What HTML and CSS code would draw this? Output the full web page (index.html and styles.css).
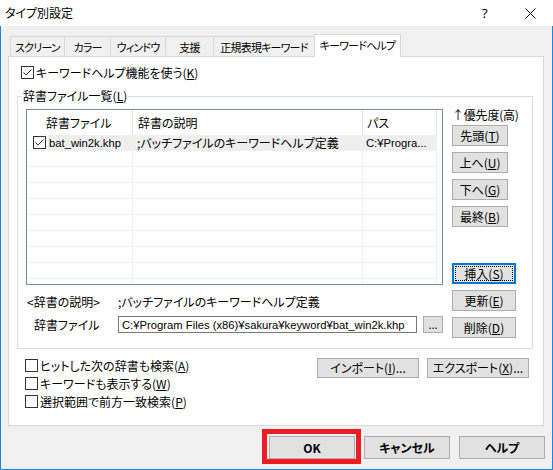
FILE: index.html
```html
<!DOCTYPE html>
<html lang="ja">
<head>
<meta charset="utf-8">
<title>タイプ別設定</title>
<link rel="stylesheet" href="styles.css">
</head>
<body>
<div class="window">
  <div class="titlebar">
    <span class="title">タイプ別設定</span>
    <span class="tb-help">?</span>
    <svg class="tb-close" width="11" height="11" viewBox="0 0 11 11"><path d="M0.5 0.5 L10.5 10.5 M10.5 0.5 L0.5 10.5" stroke="#000" stroke-width="1" fill="none"/></svg>
  </div>
  <div class="frame">
    <div class="tabs">
      <div class="tab w1">スクリーン</div>
      <div class="tab w2">カラー</div>
      <div class="tab w3">ウィンドウ</div>
      <div class="tab w4">支援</div>
      <div class="tab w5">正規表現キーワード</div>
      <div class="tab w6 active">キーワードヘルプ</div>
    </div>
    <div class="panel">
      <div class="check-row top-check">
        <svg class="cb" width="13" height="13" viewBox="0 0 13 13"><rect x="0.5" y="0.5" width="12" height="12" fill="#fff" stroke="#333"/><path d="M2.5 6.5 L5 9 L10.5 3.5" fill="none" stroke="#333" stroke-width="1"/></svg>
        <span>キーワードヘルプ機能を使う(<u>K</u>)</span>
      </div>
      <div class="group">
        <div class="group-title">辞書ファイル一覧(<u>L</u>)</div>
        <div class="group-body">
          <div class="group-left">
            <div class="list">
              <div class="lv-head">
                <div class="cell c1 h1">辞書ファイル</div>
                <div class="cell c2 h2">辞書の説明</div>
                <div class="cell c3 h3">パス</div>
              </div>
              <div class="lv-row sel">
                <div class="cell c1 r1">
                  <svg class="cb" width="13" height="13" viewBox="0 0 13 13"><rect x="0.5" y="0.5" width="12" height="12" fill="#fff" stroke="#333"/><path d="M2.5 6.5 L5 9 L10.5 3.5" fill="none" stroke="#333" stroke-width="1"/></svg>
                  <span class="en">bat_win2k.khp</span>
                </div>
                <div class="cell c2 r2">;バッチファイルのキーワードヘルプ定義</div>
                <div class="cell c3 r3"><span class="en">C:¥Progra...</span></div>
              </div>
              <div class="lv-row"><div class="cell c1"></div><div class="cell c2"></div><div class="cell c3"></div></div>
              <div class="lv-row"><div class="cell c1"></div><div class="cell c2"></div><div class="cell c3"></div></div>
              <div class="lv-row"><div class="cell c1"></div><div class="cell c2"></div><div class="cell c3"></div></div>
              <div class="lv-row"><div class="cell c1"></div><div class="cell c2"></div><div class="cell c3"></div></div>
              <div class="lv-row"><div class="cell c1"></div><div class="cell c2"></div><div class="cell c3"></div></div>
              <div class="lv-row"><div class="cell c1"></div><div class="cell c2"></div><div class="cell c3"></div></div>
              <div class="lv-row"><div class="cell c1"></div><div class="cell c2"></div><div class="cell c3"></div></div>
              <div class="lv-row"><div class="cell c1"></div><div class="cell c2"></div><div class="cell c3"></div></div>
              <div class="lv-row"><div class="cell c1"></div><div class="cell c2"></div><div class="cell c3"></div></div>
            </div>
            <div class="desc-row">
              <span class="lbl-desc">&lt;辞書の説明&gt;</span>
              <span>;バッチファイルのキーワードヘルプ定義</span>
            </div>
            <div class="file-row">
              <span class="lbl-file">辞書ファイル</span>
              <div class="input"><span class="en">C:¥Program Files (x86)¥sakura¥keyword¥bat_win2k.khp</span></div>
              <button class="btn browse">...</button>
            </div>
          </div>
          <div class="group-right">
            <div class="prio">↑優先度(高)</div>
            <button class="btn side first">先頭(<u>T</u>)</button>
            <button class="btn side">上へ(<u>U</u>)</button>
            <button class="btn side">下へ(<u>G</u>)</button>
            <button class="btn side">最終(<u>B</u>)</button>
            <button class="btn side wide focus insert">挿入(<u>S</u>)</button>
            <button class="btn side wide">更新(<u>E</u>)</button>
            <button class="btn side wide">削除(<u>D</u>)</button>
          </div>
        </div>
      </div>
      <div class="bottom">
        <div class="checks">
          <div class="check-row">
            <svg class="cb" width="13" height="13" viewBox="0 0 13 13"><rect x="0.5" y="0.5" width="12" height="12" fill="#fff" stroke="#333"/></svg>
            <span>ヒットした次の辞書も検索(<u>A</u>)</span>
          </div>
          <div class="check-row">
            <svg class="cb" width="13" height="13" viewBox="0 0 13 13"><rect x="0.5" y="0.5" width="12" height="12" fill="#fff" stroke="#333"/></svg>
            <span>キーワードも表示する(<u>W</u>)</span>
          </div>
          <div class="check-row">
            <svg class="cb" width="13" height="13" viewBox="0 0 13 13"><rect x="0.5" y="0.5" width="12" height="12" fill="#fff" stroke="#333"/></svg>
            <span>選択範囲で前方一致検索(<u>P</u>)</span>
          </div>
        </div>
        <button class="btn io">インポート(<u>I</u>)...</button>
        <button class="btn io">エクスポート(<u>X</u>)...</button>
      </div>
    </div>
    <div class="dlg-buttons">
      <div class="ok-wrap">
        <button class="btn dlg">OK</button>
        <span class="highlight"></span>
      </div>
      <button class="btn dlg">キャンセル</button>
      <button class="btn dlg">ヘルプ</button>
    </div>
  </div>
</div>
</body>
</html>
```
FILE: styles.css
```css
* { box-sizing: border-box; }
html, body { margin: 0; padding: 0; }
body {
  width: 553px;
  height: 470px;
  overflow: hidden;
  background: #fff;
  font-family: "Noto Sans CJK JP", "Noto Sans", sans-serif;
  font-size: 12px;
  line-height: 14px;
  color: #000;
  font-feature-settings: "palt";
}
u { text-decoration: underline; text-underline-offset: 1px; }
.en { font-family: "Liberation Sans", Arial, sans-serif; font-size: 11.25px; line-height: 14px; }

.window { width: 553px; height: 470px; display: flex; flex-direction: column; }

.titlebar { height: 26px; flex: none; background: #fff; display: flex; align-items: center; }
.title { flex: 1; padding-left: 5px; }
.tb-help { width: 7px; margin-right: 36px; font-family: "Noto Sans", sans-serif; font-size: 13px; }
.tb-close { margin-right: 17px; }

.frame {
  flex: 1;
  background: #f0f0f0;
  border: 1px solid #1c86dc;
  border-top: none;
}

.tabs { display: flex; align-items: flex-end; height: 22px; margin: 8px 0 0 9px; }
.tab {
  height: 20px;
  border: 1px solid #d9d9d9;
  border-bottom: none;
  margin-left: -1px;
  display: flex;
  align-items: center;
  justify-content: center;
  background: #f0f0f0;
  white-space: nowrap;
  font-size: 11px;
  letter-spacing: -0.8px;
}
.tab:first-child { margin-left: 0; }
.w1 { width: 55px; }
.w2 { width: 47px; }
.w3 { width: 56px; }
.w4 { width: 49px; }
.w5 { width: 102px; }
.w6 { width: 87px; }
.tab.active {
  height: 23px;
  margin-bottom: -1px;
  background: #fff;
  position: relative;
  z-index: 1;
  padding-bottom: 3px;
}

.panel {
  margin-left: 7px;
  width: 536px;
  height: 370px;
  background: #fff;
  border: 1px solid #d9d9d9;
}

.check-row { display: flex; align-items: center; height: 13px; gap: 2px; white-space: nowrap; }
.cb { flex: none; display: block; }
.top-check { margin: 9px 0 0 12px; }

.group {
  margin: 17px 0 0 8px;
  width: 516px;
  height: 253px;
  border: 1px solid #dcdcdc;
}
.group-title {
  width: fit-content;
  height: 14px;
  margin: -8px 0 0 4px;
  padding: 0 1px;
  background: #fff;
}
.group-body { display: flex; padding-left: 8px; gap: 9px; }
.group-left { width: 417px; }

.list {
  margin-top: 6px;
  width: 417px;
  height: 176px;
  border: 1px solid #828790;
  background: #fff;
  overflow: hidden;
}
.lv-head { display: flex; height: 25px; }
.lv-head .cell { border-right: 1px solid #e5e5e5; display: flex; align-items: center; }
.lv-row { display: flex; width: 410px; height: 16px; border-bottom: 1px solid #f0f0f0; }
.lv-row .cell { border-right: 1px solid #f0f0f0; height: 15px; display: flex; align-items: center; white-space: nowrap; overflow: hidden; }
.c1 { width: 106px; flex: none; }
.c2 { width: 230px; flex: none; }
.c3 { width: 74px; flex: none; }
.h1 { padding-left: 19px; }
.h2 { padding-left: 5px; }
.h3 { padding-left: 4px; }
.lv-row.sel { background: linear-gradient(to right, transparent 21px, #efefef 21px); }
.r1 { padding-left: 6px; gap: 3px; }
.r2 { padding-left: 4px; }
.r3 { padding-left: 3px; }

.desc-row { display: flex; height: 14px; margin-top: 10px; white-space: nowrap; }
.lbl-desc { width: 92px; padding-left: 1px; flex: none; }
.file-row { display: flex; align-items: center; height: 17px; margin-top: 7px; white-space: nowrap; }
.lbl-file { width: 92px; padding-left: 8px; flex: none; }
.input {
  width: 299px;
  height: 17px;
  border: 1px solid #7a7a7a;
  background: #fff;
  padding-left: 3px;
  line-height: 15px;
  overflow: hidden;
  flex: none;
  display: flex;
  align-items: center;
}

.btn {
  font: inherit;
  font-feature-settings: "palt";
  color: #000;
  background: #e1e1e1;
  border: 1px solid #adadad;
  padding: 0;
  margin: 0;
  display: flex;
  align-items: center;
  justify-content: center;
  white-space: nowrap;
}
.browse { width: 20px; height: 17px; margin-left: 6px; line-height: 10px; align-items: flex-end; padding-bottom: 3px; font-size: 11px; }

.group-right { width: 64px; display: flex; flex-direction: column; align-items: flex-start; }
.prio { margin-top: 5px; height: 14px; white-space: nowrap; letter-spacing: -0.2px; }
.side { width: 56px; height: 21px; margin-top: 6px; }
.side.first { margin-top: 3px; }
.side.wide { width: 64px; }
.side.insert { margin-top: 36px; }
.focus {
  border: 1px solid #0078d7;
  box-shadow: inset 0 0 0 1px #0078d7;
  outline: 1px dotted #000;
  outline-offset: -4px;
}

.bottom { display: flex; align-items: flex-start; margin-top: 9px; padding-right: 14px; }
.checks { flex: 1; display: flex; flex-direction: column; gap: 5px; padding: 1px 0 0 16px; }
.io { width: 102px; height: 20px; margin-left: 8px; }

.dlg-buttons { display: flex; justify-content: flex-end; gap: 9px; margin-top: 10px; padding-right: 7px; }
.ok-wrap { position: relative; }
.dlg { width: 86px; height: 23px; font-weight: bold; }
.highlight {
  position: absolute;
  left: -7px;
  top: -7px;
  width: 99px;
  height: 35px;
  border: 5px solid #ec1c24;
}
```
